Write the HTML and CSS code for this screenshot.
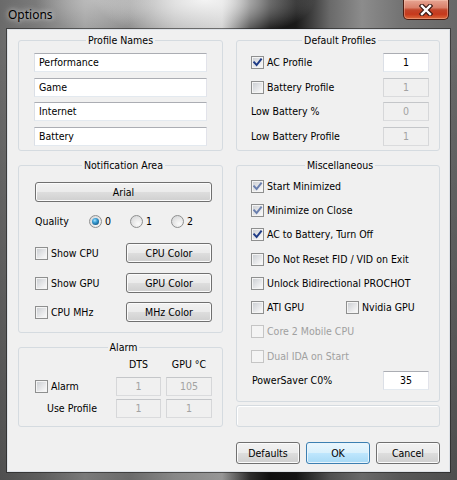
FILE: index.html
```html
<!DOCTYPE html>
<html>
<head>
<meta charset="utf-8">
<title>Options</title>
<link rel="stylesheet" href="styles.css">
</head>
<body>
<div class="window">
  <div class="titlebar">
    <span class="title">Options</span>
    <div class="close">
      <svg width="14" height="12" viewBox="0 0 14 12">
        <path d="M3 2 L11 10 M11 2 L3 10" stroke="#3b1a14" stroke-width="4.6" stroke-linecap="square" fill="none"/>
        <path d="M3 2 L11 10 M11 2 L3 10" stroke="#ffffff" stroke-width="2.4" stroke-linecap="square" fill="none"/>
      </svg>
    </div>
  </div>
  <div class="client">
    <div class="col left">
      <fieldset class="group g-names">
        <legend>Profile Names</legend>
        <div class="row"><div class="edit full">Performance</div></div>
        <div class="row"><div class="edit full">Game</div></div>
        <div class="row"><div class="edit full">Internet</div></div>
        <div class="row"><div class="edit full">Battery</div></div>
      </fieldset>

      <fieldset class="group g-notify">
        <legend>Notification Area</legend>
        <div class="btn wide">Arial</div>
        <div class="qrow">
          <span class="qlabel">Quality</span>
          <span class="ropt"><span class="radio on"></span>0</span>
          <span class="ropt"><span class="radio"></span>1</span>
          <span class="ropt"><span class="radio"></span>2</span>
        </div>
        <div class="crow r1">
          <span class="chk"><span class="box"></span>Show CPU</span>
          <div class="btn cbtn">CPU Color</div>
        </div>
        <div class="crow r2">
          <span class="chk"><span class="box"></span>Show GPU</span>
          <div class="btn cbtn">GPU Color</div>
        </div>
        <div class="crow r3">
          <span class="chk"><span class="box"></span>CPU MHz</span>
          <div class="btn cbtn">MHz Color</div>
        </div>
      </fieldset>

      <fieldset class="group g-alarm">
        <legend>Alarm</legend>
        <div class="agrid">
          <span></span>
          <span class="hdr">DTS</span>
          <span class="hdr">GPU °C</span>
          <span class="chk"><span class="box"></span>Alarm</span>
          <div class="edit num dis">1</div>
          <div class="edit num dis">105</div>
          <span class="uplabel">Use Profile</span>
          <div class="edit num dis">1</div>
          <div class="edit num dis">1</div>
        </div>
      </fieldset>
    </div>

    <div class="col right">
      <fieldset class="group g-defaults">
        <legend>Default Profiles</legend>
        <div class="row split">
          <span class="chk"><span class="box on"><svg viewBox="0 0 13 13"><path d="M3.2 6.4 L5.6 9 L10 3.4" /></svg></span>AC Profile</span>
          <div class="edit num small">1</div>
        </div>
        <div class="row split">
          <span class="chk"><span class="box"></span>Battery Profile</span>
          <div class="edit num small dis">1</div>
        </div>
        <div class="row split">
          <span class="plain">Low Battery %</span>
          <div class="edit num small dis">0</div>
        </div>
        <div class="row split">
          <span class="plain">Low Battery Profile</span>
          <div class="edit num small dis">1</div>
        </div>
      </fieldset>

      <fieldset class="group g-misc">
        <legend>Miscellaneous</legend>
        <div class="mrow"><span class="chk"><span class="box on soft"><svg viewBox="0 0 13 13"><path d="M3.2 6.4 L5.6 9 L10 3.4" /></svg></span>Start Minimized</span></div>
        <div class="mrow"><span class="chk"><span class="box on soft"><svg viewBox="0 0 13 13"><path d="M3.2 6.4 L5.6 9 L10 3.4" /></svg></span>Minimize on Close</span></div>
        <div class="mrow"><span class="chk"><span class="box on"><svg viewBox="0 0 13 13"><path d="M3.2 6.4 L5.6 9 L10 3.4" /></svg></span>AC to Battery, Turn Off</span></div>
        <div class="mrow"><span class="chk"><span class="box"></span>Do Not Reset FID / VID on Exit</span></div>
        <div class="mrow"><span class="chk"><span class="box"></span>Unlock Bidirectional PROCHOT</span></div>
        <div class="mrow">
          <span class="chk ati"><span class="box"></span>ATI GPU</span>
          <span class="chk"><span class="box"></span>Nvidia GPU</span>
        </div>
        <div class="mrow"><span class="chk disabled"><span class="box"></span>Core 2 Mobile CPU</span></div>
        <div class="mrow"><span class="chk disabled"><span class="box"></span>Dual IDA on Start</span></div>
        <div class="mrow split">
          <span class="plain ps">PowerSaver C0%</span>
          <div class="edit num small">35</div>
        </div>
      </fieldset>

      <div class="status"></div>

      <div class="buttons">
        <div class="btn dlg">Defaults</div>
        <div class="btn dlg default">OK</div>
        <div class="btn dlg">Cancel</div>
      </div>
    </div>
  </div>
</div>
</body>
</html>
```
FILE: styles.css
```css
* { box-sizing: border-box; }
html, body { margin: 0; padding: 0; }
body {
  width: 457px;
  height: 480px;
  overflow: hidden;
  background: #000;
  font-family: "DejaVu Sans Condensed", "DejaVu Sans", sans-serif;
  font-stretch: condensed;
  font-size: 10.5px;
  color: #000;
}

.window {
  width: 457px;
  height: 480px;
  display: flex;
  flex-direction: column;
  background:
    radial-gradient(110px 40px at 205px 0px, rgba(246,246,246,0.95), rgba(246,246,246,0)),
    radial-gradient(60px 30px at 95px 0px, rgba(200,200,200,0.7), rgba(200,200,200,0)),
    linear-gradient(180deg, rgba(0,0,0,0) 0px, rgba(0,0,0,0) 40px, rgba(0,0,0,0.25) 480px),
    linear-gradient(90deg, #6a6a6a 0px, #7c7c7c 40px, #a2a2a2 85px, #8e8e8e 130px, #b4b4b4 175px, #c8c8c8 222px, #3c3c3c 250px, #141414 270px, #1a1a1a 296px, #6a6a6a 330px, #8c8c8c 362px, #747474 400px, #686868 457px);
}

.titlebar {
  height: 29px;
  flex: none;
  display: flex;
  align-items: flex-start;
}
.title {
  font-family: "Noto Sans", "Open Sans", "Liberation Sans", sans-serif;
  font-stretch: normal;
  font-size: 12px;
  line-height: 30px;
  padding-left: 8px;
  color: #000;
  text-shadow: 0 0 5px rgba(255,255,255,0.75), 0 0 9px rgba(255,255,255,0.5);
}
.close {
  margin-left: auto;
  margin-right: 8px;
  width: 46px;
  height: 20px;
  border: 1px solid #4a1c12;
  border-top: none;
  border-radius: 0 0 5px 5px;
  background: linear-gradient(180deg, #e7a593 0%, #d9806a 40%, #c2452a 52%, #c6391c 75%, #dc6a3c 100%);
  box-shadow: inset 0 0 0 1px rgba(255,220,200,0.35);
  display: flex;
  align-items: center;
  justify-content: center;
}
.close svg { display: block; }

.client {
  flex: 1;
  margin: 0 7px 8px 7px;
  border: 1px solid #dde1e6;
  box-shadow: 0 0 0 1px rgba(25,25,25,0.55);
  background: #f0f0f0;
  display: flex;
  gap: 13px;
  padding: 4px 9px 0 10px;
}
.col { display: flex; flex-direction: column; }
.left { width: 205px; }
.right { width: 204px; }

.group {
  margin: 0;
  border: 1px solid #d5dbe0;
  border-radius: 3px;
  min-width: 0;
}
.group legend {
  margin: 0 auto;
  padding: 0 2px;
  line-height: 13px;
}

fieldset.g-names { padding: 3.25px 15px 2px 15px; }
fieldset.g-defaults { padding: 3.25px 10px 2px 14px; }
fieldset.g-notify { margin-top: 8px; padding: 9.75px 10px 10px 16px; }
fieldset.g-alarm { margin-top: 8px; padding: 4px 10px 8px 16px; }
fieldset.g-misc { margin-top: 8px; padding: 1.75px 10px 8.3px 14px; }

.row {
  height: 24.5px;
  display: flex;
  align-items: center;
}
.split { justify-content: space-between; }

.edit {
  height: 19px;
  border: 1px solid;
  border-color: #abadb3 #e2e3ea #e3e9ef #dbdfe6;
  background: #fff;
  padding: 0 4px;
  line-height: 17px;
  white-space: nowrap;
  overflow: hidden;
}
.edit.full { width: 100%; }
.edit.num { text-align: center; padding: 0; }
.edit.small { width: 46px; }
.edit.dis {
  background: #f0f0f0;
  border-color: #c4c6c9 #d6d7d9 #dadbdd #d6d7d9;
  color: #a2a2a2;
}

.chk {
  display: inline-flex;
  align-items: center;
  gap: 3px;
  line-height: 13px;
  white-space: nowrap;
}
.box {
  width: 13px;
  height: 13px;
  flex: none;
  border: 1px solid #8e8f8f;
  padding: 1px;
  background: linear-gradient(135deg, #cdd0d4 0%, #e6e7e9 55%, #f9f9f9 100%) content-box, #f4f4f4;
  position: relative;
}
.box svg {
  position: absolute;
  left: -1px;
  top: -1px;
  width: 13px;
  height: 13px;
}
.box svg path {
  fill: none;
  stroke: #1e3b86;
  stroke-width: 2;
  stroke-linecap: square;
}
.box.soft svg path { stroke: #6a7fae; }
.chk.disabled { color: #a0a0a0; }
.chk.disabled .box {
  border-color: #c5c5c5;
  background: #f4f4f4;
}
.plain { line-height: 13px; white-space: nowrap; }
.ps { padding-left: 1px; }

.btn {
  height: 20px;
  border: 1px solid #707070;
  border-radius: 3px;
  background: linear-gradient(180deg, #f2f2f2 0%, #ebebeb 48%, #dddddd 52%, #cfcfcf 100%);
  box-shadow: inset 0 0 0 1px #fbfbfb;
  display: flex;
  align-items: center;
  justify-content: center;
  white-space: nowrap;
}
.btn.wide { width: 100%; }

.qrow {
  margin-top: 9px;
  height: 20px;
  display: flex;
  align-items: center;
}
.qlabel { width: 58px; }
.ropt {
  width: 44px;
  display: inline-flex;
  align-items: center;
  gap: 3px;
}
.radio {
  width: 13px;
  height: 13px;
  border-radius: 50%;
  border: 1px solid #8e8f8f;
  background: radial-gradient(circle at 65% 70%, #fafafa 0%, #e8e8e8 45%, #cfd1d4 100%);
  display: flex;
  align-items: center;
  justify-content: center;
}
.radio.on::after {
  content: "";
  width: 7px;
  height: 7px;
  border-radius: 50%;
  background: radial-gradient(circle at 40% 35%, #a6e2fb 0%, #3b9fd6 35%, #145f8f 75%, #0d3f63 100%);
}

.crow {
  height: 20px;
  display: flex;
  align-items: center;
  justify-content: space-between;
}
.crow.r1 { margin-top: 12px; }
.crow.r2 { margin-top: 10px; }
.crow.r3 { margin-top: 9px; }
.cbtn { width: 86px; }

.agrid {
  display: grid;
  grid-template-columns: 76px 45px 46px;
  grid-template-rows: 16px 19px 19px;
  column-gap: 5px;
  row-gap: 3px;
}
.hdr { text-align: center; line-height: 13px; }
.agrid .chk { align-self: center; }
.uplabel { align-self: center; padding-left: 12px; line-height: 13px; }

.mrow {
  height: 24.3px;
  display: flex;
  align-items: center;
}
.chk.ati { width: 95px; }

.status {
  margin-top: 3px;
  height: 22px;
  border: 1px solid #d5dbe0;
  border-radius: 3px;
  box-shadow: inset 1px 1px 0 #fff;
}

.buttons {
  margin-top: 15px;
  display: flex;
  justify-content: space-between;
}
.btn.dlg { width: 64px; height: 22px; }
.btn.default {
  border-color: #3c7fb1;
  background: linear-gradient(180deg, #eaf6fd 0%, #d9f0fc 48%, #bee6fd 52%, #a7d9f5 100%);
  box-shadow: inset 0 0 0 1px #e8f4fc;
}
```
